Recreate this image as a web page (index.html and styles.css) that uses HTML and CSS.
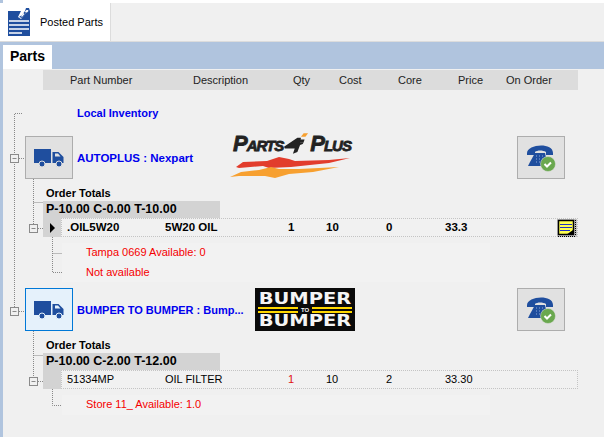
FILE: index.html
```html
<!DOCTYPE html>
<html lang="en">
<head>
  <meta charset="UTF-8" />
  <title>Posted Parts</title>
  <link rel="stylesheet" href="styles.css">
</head>
<body>
  <div class="tab-strip">
    <div class="doc-tab">
      <svg class="doc-icon" viewBox="0 0 22 28" width="22" height="28">
        <path d="M0 3h13l-3 6 3 2 5-6V3h4v25H0z" fill="#1f4e9e"/>
        <path d="M11 9l3-2 3-4 1-3h3l1 3-2 2h-2l-4 5z" fill="#1f4e9e"/>
        <path d="M17 3.500l1.500-1.500h1.500l.5 1-1.500 1.500h-1.500z" fill="#fff"/>
        <path d="M13.500 8.500l2.500-3" stroke="#fff" stroke-width="1.200"/>
        <path d="M1 13h20M1 17h20M1 21h20M1 25h13" stroke="#fff" stroke-width="1.500"/>
      </svg>
      <span>Posted Parts</span>
    </div>
  </div>

  <div class="parts-band">
    <div class="parts-tab">Parts</div>
  </div>

  <div class="content">
    <div class="grid-head">
      <span class="col-part">Part Number</span>
      <span class="col-desc">Description</span>
      <span class="col-qty">Qty</span>
      <span class="col-cost">Cost</span>
      <span class="col-core">Core</span>
      <span class="col-price">Price</span>
      <span>On Order</span>
    </div>

    <div class="local-row">Local Inventory</div>

    <div class="supplier">
      <button class="icon-btn">
        <svg viewBox="0 0 32 20" width="32" height="20"><use href="#truck"/></svg>
      </button>
      <div class="supplier-name">AUTOPLUS : Nexpart</div>
      <div class="logo-parts">
        <div class="logo-parts-text">
          <span>Parts</span>
          <svg viewBox="0 0 28 24" width="25" height="22">
            <path d="M15 5L0 15l1 2h11l-2 6 5-2 3-8 3-1 1-2h-4l1-5z" fill="#222"/>
            <path d="M19 4l3-4h5l-3 4z" fill="#f7a030"/>
            <path d="M17 10l1-3h5l-1 3z" fill="#222"/>
          </svg>
          <span>Plus</span>
        </div>
        <svg class="swoosh" viewBox="0 0 126 22" width="126" height="22">
          <path d="M7 10L14 5 38 4 50 0 60 2 66 4 100 3 121 1 100 6 62 10 40 11 34 9 10 11z" fill="#e23c2c"/>
          <path d="M1 20L12 15 30 13 42 10 50 12 70 12 110 10 84 15 60 17 46 21 36 19 10 19z" fill="#f7a030"/>
        </svg>
      </div>
      <button class="icon-btn phone-btn">
        <svg viewBox="0 0 30 28" width="30" height="28"><use href="#phone"/></svg>
      </button>
    </div>
    <div class="order-title">Order Totals</div>
    <div class="order-sum">P-10.00 C-0.00 T-10.00</div>
    <div class="part-row">
      <div class="row-handle"><i class="arrow"></i></div>
      <div class="row-cells bold">
        <span class="cell-part">.OIL5W20</span>
        <span class="cell-desc">5W20 OIL</span>
        <span class="cell-qty">1</span>
        <span class="cell-cost">10</span>
        <span class="cell-core">0</span>
        <span class="cell-price">33.3</span>
        <svg class="note-icon" viewBox="0 0 20 18" width="20" height="18">
          <rect width="20" height="18" fill="#c4c4c4"/>
          <rect x="1.500" y="1.500" width="15" height="14" fill="#ffff50" stroke="#000" stroke-width="1.500"/>
          <path d="M3 5.500h12M3 8.500h12M3 11.500h10" stroke="#2030c0"/>
          <path d="M9 16l7-5v5z" fill="#000"/>
          <path d="M18.500 1v16M1 17.500h18" stroke="#000" stroke-dasharray="1 1"/>
        </svg>
      </div>
    </div>
    <div class="stock-panel">
      <div>Tampa 0669 Available: 0</div>
      <div>Not available</div>
    </div>

    <div class="supplier second">
      <button class="icon-btn active">
        <svg viewBox="0 0 32 20" width="32" height="20"><use href="#truck-active"/></svg>
      </button>
      <div class="supplier-name short">BUMPER TO BUMPER : Bump...</div>
      <div class="logo-bumper">
        <span>BUMPER</span>
        <div class="logo-to"><b>TO</b></div>
        <span>BUMPER</span>
      </div>
      <button class="icon-btn phone-btn">
        <svg viewBox="0 0 30 28" width="30" height="28"><use href="#phone"/></svg>
      </button>
    </div>
    <div class="order-title">Order Totals</div>
    <div class="order-sum">P-10.00 C-2.00 T-12.00</div>
    <div class="part-row">
      <div class="row-handle"></div>
      <div class="row-cells">
        <span class="cell-part">51334MP</span>
        <span class="cell-desc">OIL FILTER</span>
        <span class="cell-qty red">1</span>
        <span class="cell-cost">10</span>
        <span class="cell-core">2</span>
        <span class="cell-price">33.30</span>
      </div>
    </div>
    <div class="stock-panel one">
      <div>Store 11_ Available: 1.0</div>
    </div>

    <!-- tree connectors sit over the rows -->
    <svg class="tree" width="70" height="368" viewBox="0 69 70 368">
      <g class="tree-lines">
        <path d="M22 113.500H14.500V307"/>
        <path d="M19 158.500H24M19 311.500H24"/>
        <path d="M33.500 179V224M33.500 202.500H43M38 228.500H43"/>
        <path d="M52.500 237V272.500H62M52.500 253.500H62"/>
        <path d="M33.500 331V377M33.500 355.500H43M38 381.500H43"/>
        <path d="M52.500 389V405.500H62"/>
      </g>
      <g class="tree-box">
        <rect x="10.500" y="154.500" width="8" height="8"/><path d="M12.500 158.500h4"/>
        <rect x="29.500" y="224.500" width="8" height="8"/><path d="M31.500 228.500h4"/>
        <rect x="10.500" y="307.500" width="8" height="8"/><path d="M12.500 311.500h4"/>
        <rect x="29.500" y="377.500" width="8" height="8"/><path d="M31.500 381.500h4"/>
      </g>
    </svg>
  </div>

  <svg class="defs" width="0" height="0">
    <symbol id="truck" viewBox="0 0 32 20">
      <path d="M1 1h17v14H1zM19.500 4h6l5 5v6H19.500z" fill="#1f4e9e"/>
      <path d="M22 5.500h3l2.500 3H22z" fill="#e1e1e1"/>
      <circle cx="9" cy="16" r="3" fill="#1f4e9e" stroke="#e1e1e1"/>
      <circle cx="26" cy="16" r="3" fill="#1f4e9e" stroke="#e1e1e1"/>
    </symbol>
    <symbol id="truck-active" viewBox="0 0 32 20">
      <path d="M1 1h17v14H1zM19.500 4h6l5 5v6H19.500z" fill="#1f4e9e"/>
      <path d="M22 5.500h3l2.500 3H22z" fill="#e5f1fb"/>
      <circle cx="9" cy="16" r="3" fill="#1f4e9e" stroke="#e5f1fb"/>
      <circle cx="26" cy="16" r="3" fill="#1f4e9e" stroke="#e5f1fb"/>
    </symbol>
    <symbol id="phone" viewBox="0 0 30 28">
      <path d="M1 10C0 0 27 -2 27 9v2h-7V8C17 6 11 6 9 8v3H1z" fill="#1f4e9e"/>
      <path d="M9 9h10l3 13H2l2-4z" fill="#1f4e9e"/>
      <path d="M10 12h1M13 12h1M16 12h1M10 15h1M13 15h1M16 15h1M10 18h1M13 18h1" stroke="#8fa8d8"/>
      <circle cx="22" cy="20" r="7.500" fill="#6aa84f" stroke="#e1e1e1" stroke-width=".5"/>
      <path d="M18.500 20l2.500 2.500 4-4" fill="none" stroke="#fff" stroke-width="2"/>
    </symbol>
  </svg>
</body>
</html>
```

FILE: styles.css
```css
body {
  margin: 0;
  width: 604px;
  height: 437px;
  overflow: hidden;
  background: linear-gradient(#b0c4de, #b0c4de) 0 0 / 3px 100% no-repeat #fff;
  font-family: 'Liberation Sans', Arial, sans-serif;
  font-size: 11px;
  color: #000;
}
.tab-strip {
  margin-top: 3px;
  height: 38px;
  background-color: #f0f0f0;
  border-bottom: 1px solid #dcdcdc;
}
.doc-tab {
  width: 111px;
  height: 38px;
  background-color: #fff;
  border-right: 1px solid #dcdcdc;
  box-sizing: border-box;
  display: flex;
  align-items: center;
  padding-left: 8px;
  gap: 10px;
}
.doc-icon {
  flex: none;
}
.parts-band {
  height: 27px;
  background-color: #b0c4de;
  padding: 3px 0 0 3px;
  box-sizing: border-box;
}
.parts-tab {
  width: 49px;
  height: 24px;
  background-color: #fff;
  font-size: 14px;
  font-weight: 700;
  line-height: 23px;
  padding-left: 7px;
  box-sizing: border-box;
}
.content {
  position: relative;
  margin-left: 3px;
  height: 368px;
  background-color: #f0f0f0;
  padding: 1px 0 0 40px;
  box-sizing: border-box;
}
.grid-head {
  width: 535px;
  height: 20px;
  background-color: #dcdcdc;
  display: flex;
  align-items: center;
  color: #222;
}
.grid-head span {
  white-space: nowrap;
}
.col-part { margin-left: 27px; width: 123px; }
.col-desc { width: 100px; }
.col-qty { width: 46px; }
.col-cost { width: 59px; }
.col-core { width: 60px; }
.col-price { width: 48px; }

.local-row {
  margin: 17px 0 0 34px;
  height: 12px;
  line-height: 12px;
  font-weight: 700;
  color: #0000ee;
}
.supplier {
  margin: 17px 0 0 -18px;
  height: 43px;
  display: flex;
  align-items: center;
}
.supplier.second {
  margin-top: 6px;
}
.icon-btn {
  width: 48px;
  height: 43px;
  padding: 0;
  flex: none;
  background-color: #e1e1e1;
  border: 1px solid #adadad;
  display: flex;
  align-items: center;
  justify-content: center;
}
.icon-btn.active {
  background-color: #e5f1fb;
  border-color: #0078d7;
}
.supplier-name {
  margin-left: 4px;
  width: 152px;
  font-weight: 700;
  font-size: 11.500px;
  color: #0000ee;
  white-space: nowrap;
}
.supplier-name.short {
  width: 178px;
  font-size: 11px;
}
.phone-btn {
  margin-left: auto;
  margin-right: 39px;
}
.logo-parts {
  width: 126px;
  height: 50px;
  margin-top: -3px;
  display: flex;
  flex-direction: column;
  align-items: center;
  justify-content: flex-end;
  overflow: hidden;
}
.logo-parts-text {
  display: flex;
  align-items: center;
  gap: 1px;
  height: 22px;
  font-size: 22px;
  font-style: italic;
  font-weight: 700;
  font-variant: small-caps;
  letter-spacing: -1px;
  line-height: 22px;
  color: #222;
  -webkit-text-stroke: 0.8px #222;
  white-space: nowrap;
}
.swoosh {
  margin-top: 2px;
  margin-bottom: 2px;
}
.logo-bumper {
  width: 100px;
  height: 43px;
  box-sizing: border-box;
  background-color: #0a0a0a;
  color: #f4f4f4;
  font-family: 'DejaVu Sans', sans-serif;
  font-weight: 700;
  font-size: 15px;
  text-align: center;
  padding-top: 5px;
  overflow: hidden;
}
.logo-bumper span {
  display: block;
  height: 12px;
  line-height: 12px;
  transform: scaleX(1.3);
}
.logo-to {
  margin: 2px 3px;
  height: 6px;
  background: linear-gradient(#ffd800 0 2px, #0a0a0a 2px 4px, #ffd800 4px);
  font-family: 'Liberation Sans', Arial, sans-serif;
  font-size: 6px;
  line-height: 6px;
}
.logo-to b {
  display: inline-block;
  background-color: #0a0a0a;
  padding: 0 3px;
}
.order-title {
  margin: 8px 0 0 3px;
  height: 14px;
  line-height: 12px;
  font-weight: 700;
}
.order-sum {
  width: 177px;
  height: 17px;
  line-height: 17px;
  padding-left: 3px;
  box-sizing: border-box;
  background-color: #d3d3d3;
  font-size: 12.500px;
  font-weight: 700;
}
.part-row {
  display: flex;
  height: 19px;
}
.row-handle {
  width: 18px;
  flex: none;
  background-color: #d3d3d3;
  display: flex;
  align-items: center;
  justify-content: center;
}
.arrow {
  border-left: 5px solid #000;
  border-top: 5px solid transparent;
  border-bottom: 5px solid transparent;
}
.row-cells {
  width: 517px;
  box-sizing: border-box;
  border: 1px dotted #c4c4c4;
  padding-bottom: 1px;
  display: flex;
  align-items: center;
  position: relative;
  background-color: #f1f1f1;
}
.row-cells.bold {
  font-weight: 700;
  font-size: 11.500px;
}
.row-cells span {
  white-space: nowrap;
}
.cell-part { margin-left: 5px; width: 98px; }
.cell-desc { width: 123px; }
.cell-qty { width: 38px; }
.cell-cost { width: 60px; }
.cell-core { width: 59px; }
.cell-price { width: 100px; }
.red { color: #e01010; }
.note-icon {
  position: absolute;
  right: 0;
  top: 0;
}
.stock-panel {
  margin: 6px 0 0 19px;
  width: 428px;
  padding: 0 0 0 24px;
  box-sizing: border-box;
  color: #f50000;
  background-color: #f2f2f2;
}
.stock-panel div {
  height: 19.500px;
  line-height: 19px;
}
.tree {
  position: absolute;
  left: -3px;
  top: 0;
}
.tree-lines {
  fill: none;
  stroke: #888;
  stroke-dasharray: 1 1;
}
.tree-box {
  fill: #f0f0f0;
  stroke: #8a8a8a;
}
.defs {
  position: absolute;
}
```
